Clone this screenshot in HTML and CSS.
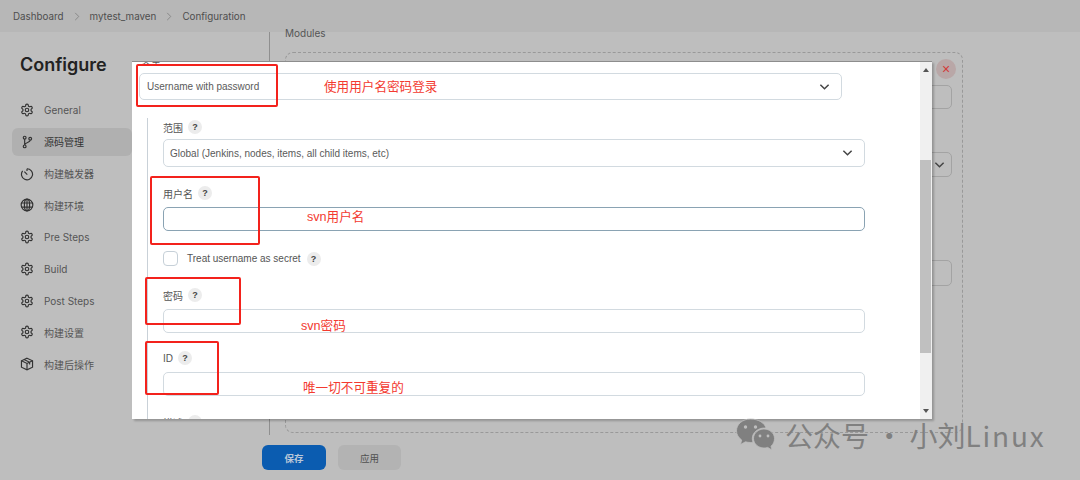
FILE: index.html
```html
<!DOCTYPE html>
<html lang="zh">
<head>
<meta charset="utf-8">
<title>Configure</title>
<link rel="stylesheet" href="styles.css">
</head>
<body>
<svg class="defs" width="0" height="0">
  <symbol id="gear" viewBox="0 0 24 24"><path d="M12.22 2h-.44a2 2 0 0 0-2 2v.18a2 2 0 0 1-1 1.73l-.43.25a2 2 0 0 1-2 0l-.15-.08a2 2 0 0 0-2.73.73l-.22.38a2 2 0 0 0 .73 2.73l.15.1a2 2 0 0 1 1 1.72v.51a2 2 0 0 1-1 1.74l-.15.09a2 2 0 0 0-.73 2.73l.22.38a2 2 0 0 0 2.73.73l.15-.08a2 2 0 0 1 2 0l.43.25a2 2 0 0 1 1 1.73V20a2 2 0 0 0 2 2h.44a2 2 0 0 0 2-2v-.18a2 2 0 0 1 1-1.73l.43-.25a2 2 0 0 1 2 0l.15.08a2 2 0 0 0 2.73-.73l.22-.39a2 2 0 0 0-.73-2.73l-.15-.08a2 2 0 0 1-1-1.74v-.5a2 2 0 0 1 1-1.74l.15-.09a2 2 0 0 0 .73-2.73l-.22-.38a2 2 0 0 0-2.73-.73l-.15.08a2 2 0 0 1-2 0l-.43-.25a2 2 0 0 1-1-1.73V4a2 2 0 0 0-2-2z"/><circle cx="12" cy="12" r="3"/></symbol>
  <symbol id="branch" viewBox="0 0 24 24"><circle cx="8" cy="4.500" r="2.400"/><circle cx="8" cy="19.500" r="2.400"/><circle cx="17.500" cy="6.500" r="2.400"/><path d="M8 7v10M17.500 9c0 4-9.500 3.500-9.500 8"/></symbol>
  <symbol id="timer" viewBox="0 0 24 24"><path d="M12 3a9.500 9.500 0 1 1-7.500 3.700"/><path d="M12 3v4M7.500 8l5 5"/></symbol>
  <symbol id="globe" viewBox="0 0 24 24"><circle cx="12" cy="12" r="10"/><ellipse cx="12" cy="12" rx="4.500" ry="10"/><path d="M12 2v20M2.500 8.500h19M2.500 15.500h19"/></symbol>
  <symbol id="cube" viewBox="0 0 24 24"><path d="M12 2l9.500 4.500v11L12 22l-9.500-4.500v-11z"/><path d="M2.500 6.500L12 11l9.500-4.500M12 11v11M7 4.300l9.500 4.700v4"/></symbol>
</svg>

<div class="page">
  <nav class="crumbs">
    <span>Dashboard</span><svg class="sep" viewBox="0 0 6 10"><path d="M1 1l4 4-4 4"/></svg><span>mytest_maven</span><svg class="sep" viewBox="0 0 6 10"><path d="M1 1l4 4-4 4"/></svg><span>Configuration</span>
  </nav>
  <div class="content">
    <aside class="side">
      <h1 class="side-title">Configure</h1>
      <ul class="menu">
        <li class="menu-item"><svg class="ico"><use href="#gear"/></svg>General</li>
        <li class="menu-item active"><svg class="ico"><use href="#branch"/></svg>源码管理</li>
        <li class="menu-item"><svg class="ico"><use href="#timer"/></svg>构建触发器</li>
        <li class="menu-item"><svg class="ico"><use href="#globe"/></svg>构建环境</li>
        <li class="menu-item"><svg class="ico"><use href="#gear"/></svg>Pre Steps</li>
        <li class="menu-item"><svg class="ico"><use href="#gear"/></svg>Build</li>
        <li class="menu-item"><svg class="ico"><use href="#gear"/></svg>Post Steps</li>
        <li class="menu-item"><svg class="ico"><use href="#gear"/></svg>构建设置</li>
        <li class="menu-item"><svg class="ico"><use href="#cube"/></svg>构建后操作</li>
      </ul>
    </aside>
    <main class="main">
      <div class="modules">Modules</div>
      <section class="card">
        <span class="card-close">×</span>
        <div class="ghost g1"></div>
        <div class="ghost g2"><svg class="chev" viewBox="0 0 12 8"><path d="M1.500 1.500L6 6l4.500-4.500"/></svg></div>
        <div class="ghost g3"></div>
      </section>
    </main>
  </div>
  <footer class="actions">
    <button class="btn primary">保存</button>
    <button class="btn secondary">应用</button>
  </footer>
</div>

<div class="modal">
  <div class="modal-body">
    <div class="peek">类型</div>
    <div class="select top-select">Username with password<svg class="chev" viewBox="0 0 12 8"><path d="M1.500 1.500L6 6l4.500-4.500"/></svg></div>
    <div class="group">
      <div class="label l-scope">范围<span class="help">?</span></div>
      <div class="select">Global (Jenkins, nodes, items, all child items, etc)<svg class="chev" viewBox="0 0 12 8"><path d="M1.500 1.500L6 6l4.500-4.500"/></svg></div>
      <div class="label l-user">用户名<span class="help">?</span></div>
      <div class="input focused"></div>
      <div class="check-row"><span class="check"></span>Treat username as secret<span class="help">?</span></div>
      <div class="label l-pass">密码<span class="help">?</span></div>
      <div class="input"></div>
      <div class="label l-id">ID<span class="help">?</span></div>
      <div class="input"></div>
      <div class="label l-desc">描述<span class="help">?</span></div>
    </div>
  </div>
  <div class="scrollbar">
    <span class="arrow up"></span>
    <span class="thumb"></span>
    <span class="arrow down"></span>
  </div>
</div>

<div class="mark m1"></div>
<div class="mark m2"></div>
<div class="mark m3"></div>
<div class="mark m4"></div>
<div class="note n1">使用用户名密码登录</div>
<div class="note n2">svn用户名</div>
<div class="note n3">svn密码</div>
<div class="note n4">唯一切不可重复的</div>

<div class="watermark">
  <svg class="wx" viewBox="0 0 40 34">
    <path class="wx-a" d="M15 1C7 1 1 6.300 1 12.800c0 3.700 2 7 5.200 9.200L5 26.500l5-2.700c1.500.4 3.200.7 5 .7 1 0 1.500 0 2.500-.2-.5-1.300-.7-2.500-.7-3.800C16.800 14.500 22.500 10 29 10c.5 0 1 0 1.500.1C29.200 5 22.800 1 15 1z"/>
    <path class="wx-a" d="M39 20.500C39 15.200 34.200 11 28.500 11S18 15.200 18 20.500 22.800 30 28.500 30c1.300 0 2.500-.2 3.700-.6l4.300 2.600-1-3.800c2.200-1.800 3.500-4.400 3.500-7.700z"/>
    <circle class="wx-e" cx="10" cy="9" r="1.700"/><circle class="wx-e" cx="20" cy="9" r="1.700"/>
    <circle class="wx-e" cx="24.500" cy="18" r="1.400"/><circle class="wx-e" cx="32.500" cy="18" r="1.400"/>
  </svg>
  <span>公众号 · 小刘<span class="wm-latin">Linux</span></span>
</div>
</body>
</html>
```
FILE: styles.css
```css
* { box-sizing: border-box; }
html, body { margin: 0; height: 480px; overflow: hidden; }
body {
  position: relative;
  width: 1080px;
  background: #bebebe;
  font-family: "Liberation Sans", "Noto Sans CJK SC", sans-serif;
  color: #555;
}
.defs { position: absolute; }
.page { display: flex; flex-direction: column; height: 480px; }

.crumbs {
  display: flex; align-items: center; gap: 10px;
  height: 32px; padding-left: 13px;
  background: #b7b7b7;
  font: 9.800px "Inter", "Noto Sans CJK SC", sans-serif;
  color: #4e4e4e;
}
.sep { width: 6px; height: 9px; fill: none; stroke: #858585; stroke-width: 1; }

.content { display: flex; height: 403px; }
.side { width: 270px; flex: none; border-right: 1px solid #8f8f8f; padding: 21px 0 0 12px; }
.side-title {
  margin: 0 0 19px 8px;
  font: 600 18px/24px "Inter", sans-serif;
  color: #222;
}
.menu { list-style: none; margin: 0; padding: 0; width: 120px; }
.menu-item {
  display: flex; align-items: center; gap: 10px;
  height: 28px; margin-bottom: 3.750px; padding-left: 8px;
  font: 10px "Inter", "Noto Sans CJK SC", sans-serif;
  color: #555;
  border-radius: 6px;
}
.menu-item.active { background: #b0b0b0; color: #333; }
.ico { width: 14px; height: 14px; fill: none; stroke: #333; stroke-width: 2; flex: none; }

.main { flex: 1; padding: 0 117px 0 15px; }
.modules { height: 20px; font: 10px/3px "Inter", sans-serif; color: #555; }
.card {
  position: relative;
  height: 381px;
  padding: 32px 10px 0 0;
  display: flex; flex-direction: column; align-items: flex-end;
  border: 1px dashed #999;
  border-radius: 8px;
}
.card-close {
  position: absolute; top: 6px; right: 6px;
  width: 20px; height: 20px; border-radius: 50%;
  background: #b9a7a7; color: #d23a3a;
  font: 14px/20px "Liberation Sans", sans-serif; text-align: center;
}
.ghost {
  width: 120px; border: 1px solid #a3a3a3; border-radius: 5px;
  display: flex; align-items: center; justify-content: flex-end; padding-right: 6px;
}
.g1 { height: 24px; margin-bottom: 43px; }
.g2 { height: 25px; margin-bottom: 83px; }
.g3 { height: 26px; }

.actions { flex: 1; display: flex; gap: 12px; padding: 10px 0 0 262px; }
.btn {
  height: 25px; width: 64px; border: 0; border-radius: 6px;
  font: 600 9.500px "Noto Sans CJK SC", sans-serif;
}
.primary { background: #0b5cb0; color: #b9c7d8; }
.secondary { width: 63px; background: #b3b3b3; color: #505050; font-weight: 400; }

.modal {
  position: absolute; left: 132px; top: 61px;
  width: 800px; height: 358px;
  display: flex;
  background: #fff;
  border-top: 1px solid #8d8d8d;
  box-shadow: 2px 2px 2px rgba(0, 0, 0, .22);
}
.modal-body { flex: 1; overflow: hidden; padding: 0 0 0 7px; }
.peek { height: 18px; margin-top: -7px; padding-left: 2px; font-size: 10px; line-height: 12px; }
.select, .input {
  display: flex; align-items: center; justify-content: space-between;
  border: 1px solid #d2dae0; border-radius: 5px; background: #fff;
  font-size: 10px; color: #5a5a5a;
}
.select { height: 28px; padding: 0 11px 0 6px; }
.input { height: 24px; }
.focused { border-color: #8aa3b3; }
.top-select { width: 703px; height: 27px; padding-left: 7px; margin-bottom: 18px; }
.chev { width: 11px; height: 8px; fill: none; stroke: #444; stroke-width: 1.600; flex: none; }

.group { margin-left: 8px; width: 718px; padding: 2px 0 0 15px; border-left: 1px solid #c9d1d8; }
.label { display: flex; align-items: center; gap: 5px; height: 14px; font-size: 10px; color: #555; }
.l-scope { margin-bottom: 5px; }
.l-user { margin: 19px 0 7px; }
.l-pass { margin: 22px 0 7px; }
.l-id { margin: 18px 0 7px; }
.l-desc { margin: 19px 0 0; }
.help {
  display: inline-block; width: 14px; height: 14px; flex: none;
  border-radius: 50%; background: #ececec; color: #444;
  font: 700 9px/14px "Liberation Sans", sans-serif; text-align: center;
}
.check-row { display: flex; align-items: center; height: 15px; margin-top: 20px; font-size: 10px; color: #555; }
.check { width: 15px; height: 15px; margin-right: 9px; border: 1px solid #c6d0d8; border-radius: 4px; }
.check-row .help { margin-left: 6px; }

.scrollbar { position: relative; width: 12px; background: #f0f0f0; }
.thumb { position: absolute; left: 0; top: 98px; width: 11px; height: 193px; background: #c0c0c0; }
.arrow { position: absolute; left: 3px; width: 0; height: 0; border-left: 3px solid transparent; border-right: 3px solid transparent; }
.up { top: 6px; border-bottom: 4px solid #555; }
.down { bottom: 6px; border-top: 4px solid #555; }

.mark { position: absolute; border: 2px solid #f3221c; border-radius: 2px; }
.m1 { left: 136px; top: 64px; width: 142px; height: 43px; }
.m2 { left: 150px; top: 176px; width: 110px; height: 69px; }
.m3 { left: 145px; top: 277px; width: 96px; height: 48px; }
.m4 { left: 145px; top: 341px; width: 74px; height: 54px; }

.note { position: absolute; color: #f33a30; font-size: 12.600px; line-height: 16px; white-space: nowrap; }
.n1 { left: 324px; top: 79px; }
.n2 { left: 307px; top: 209px; }
.n3 { left: 301px; top: 318px; }
.n4 { left: 303px; top: 380px; }

.watermark {
  position: absolute; left: 735px; top: 417px;
  display: flex; align-items: center; gap: 9px;
  color: #808080; font: 28px/36px "Noto Sans CJK SC", sans-serif; white-space: nowrap;
}
.wm-latin { letter-spacing: 1.800px; }
.wx { width: 41px; height: 34px; flex: none; }
.wx-a { fill: #808080; stroke: #bebebe; stroke-width: .8; }
.wx-e { fill: #bebebe; }
```
